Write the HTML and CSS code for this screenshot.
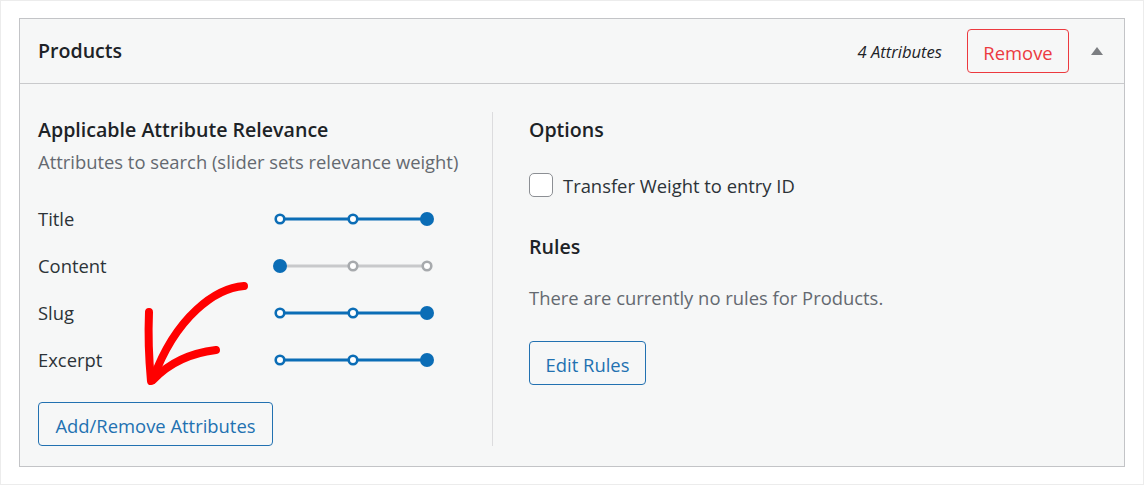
FILE: index.html
```html
<!DOCTYPE html>
<html lang="en">
<head>
<meta charset="utf-8">
<title>Products</title>
<link rel="stylesheet" href="styles.css">
</head>
<body>
<div class="frame">
  <section class="panel">
    <header class="panel-head">
      <h2 class="panel-title">Products</h2>
      <span class="attr-count">4 Attributes</span>
      <button class="btn btn-remove" type="button">Remove</button>
      <span class="toggle" aria-hidden="true"></span>
    </header>
    <div class="panel-body">
      <div class="col col-left">
        <h3 class="col-title">Applicable Attribute Relevance</h3>
        <p class="muted sub">Attributes to search (slider sets relevance weight)</p>
        <ul class="attr-list">
          <li class="attr-row">
            <span class="attr-name">Title</span>
            <svg class="slider" viewBox="0 0 162 16" width="162" height="16">
              <line class="track on" x1="8" y1="8" x2="155" y2="8"/>
              <circle class="dot on" cx="8" cy="8" r="4.3"/>
              <circle class="dot on" cx="81" cy="8" r="4.3"/>
              <circle class="knob" cx="155" cy="8" r="7"/>
            </svg>
          </li>
          <li class="attr-row">
            <span class="attr-name">Content</span>
            <svg class="slider" viewBox="0 0 162 16" width="162" height="16">
              <line class="track off" x1="8" y1="8" x2="155" y2="8"/>
              <circle class="dot off" cx="81" cy="8" r="4.3"/>
              <circle class="dot off" cx="155" cy="8" r="4.3"/>
              <circle class="knob" cx="8" cy="8" r="7"/>
            </svg>
          </li>
          <li class="attr-row">
            <span class="attr-name">Slug</span>
            <svg class="slider" viewBox="0 0 162 16" width="162" height="16">
              <line class="track on" x1="8" y1="8" x2="155" y2="8"/>
              <circle class="dot on" cx="8" cy="8" r="4.3"/>
              <circle class="dot on" cx="81" cy="8" r="4.3"/>
              <circle class="knob" cx="155" cy="8" r="7"/>
            </svg>
          </li>
          <li class="attr-row">
            <span class="attr-name">Excerpt</span>
            <svg class="slider" viewBox="0 0 162 16" width="162" height="16">
              <line class="track on" x1="8" y1="8" x2="155" y2="8"/>
              <circle class="dot on" cx="8" cy="8" r="4.3"/>
              <circle class="dot on" cx="81" cy="8" r="4.3"/>
              <circle class="knob" cx="155" cy="8" r="7"/>
            </svg>
          </li>
        </ul>
        <button class="btn btn-blue btn-attrs" type="button">Add/Remove Attributes</button>
      </div>
      <div class="divider"></div>
      <div class="col col-right">
        <h3 class="col-title">Options</h3>
        <label class="check-row">
          <span class="checkbox"></span>
          <span>Transfer Weight to entry ID</span>
        </label>
        <h3 class="col-title rules-title">Rules</h3>
        <p class="muted rules-text">There are currently no rules for Products.</p>
        <button class="btn btn-blue btn-rules" type="button">Edit Rules</button>
      </div>
    </div>
  </section>
  <svg class="scribble" viewBox="0 0 140 120" width="140" height="120" aria-hidden="true">
    <path d="M113 12 C 85 14, 45 42, 22 105"/>
    <path d="M18 38 C 17 62, 18 86, 20 107"/>
    <path d="M85 76 C 60 79, 38 89, 22 106"/>
  </svg>
</div>
</body>
</html>
```
FILE: styles.css
```css
* { box-sizing: border-box; }

html, body {
  margin: 0;
  padding: 0;
  background: #fff;
}

body {
  font-family: "Open Sans", "Noto Sans", "Liberation Sans", sans-serif;
  color: #2c3338;
  font-size: 18.4px;
}

.frame {
  position: relative;
  width: 1144px;
  height: 485px;
  padding: 17px 18px 0 18px;
  border: 1px solid #ececec;
}

.panel {
  width: 1106px;
  height: 449px;
  border: 1px solid #c3c4c7;
  background: #f6f7f7;
  display: flex;
  flex-direction: column;
}

.panel-head {
  height: 65px;
  flex: none;
  border-bottom: 1px solid #c9cacc;
  display: flex;
  align-items: center;
  padding: 0 21px 0 18px;
}

.panel-title {
  margin: 0;
  font-size: 19.6px;
  font-weight: 600;
  color: #1d2327;
  flex: 1;
  line-height: 24px;
}

.attr-count {
  font-style: italic;
  font-size: 16.6px;
  color: #1d2327;
  margin-right: 25px;
}

.btn {
  font-family: inherit;
  font-size: 18.4px;
  height: 44px;
  border-radius: 4px;
  background: transparent;
  cursor: pointer;
  padding: 0;
  line-height: 46px;
  text-align: center;
  overflow: hidden;
}

.btn-remove {
  width: 102px;
  border: 1px solid #ec3a3f;
  color: #ec3a3f;
  margin-top: -1px;
}

.toggle {
  width: 0;
  height: 0;
  margin-left: 22px;
  border-left: 6px solid transparent;
  border-right: 6px solid transparent;
  border-bottom: 8px solid #7c7e82;
}

.panel-body {
  flex: 1;
  display: grid;
  grid-template-columns: 454px 1px 1fr;
  padding: 28px 0 20px 18px;
}

.divider {
  background: #dcdcde;
}

.col-left { padding-top: 6px; }
.col-right { padding: 6px 0 0 36px; }

.col-title {
  margin: 0;
  font-size: 19.6px;
  font-weight: 600;
  line-height: 24px;
  color: #1d2327;
}

.muted {
  color: #646970;
  margin: 0;
  line-height: 24px;
}

.sub {
  margin-top: 8px;
}

.attr-list {
  list-style: none;
  margin: 21px 0 0 0;
  padding: 0;
}

.attr-row {
  height: 47px;
  display: flex;
  align-items: center;
}

.attr-name {
  width: 234px;
  color: #2c3338;
}

.slider { display: block; }

.track { stroke-width: 3; }
.track.on { stroke: #0b6db6; }
.track.off { stroke: #c8c9cb; }

.dot { fill: #fff; stroke-width: 2.6; }
.dot.on { stroke: #0b6db6; }
.dot.off { stroke: #a7aaad; }

.knob { fill: #0b6db6; }

.btn-blue {
  border: 1px solid #2271b1;
  color: #2271b1;
}

.btn-attrs {
  margin-top: 19px;
  width: 235px;
}

.check-row {
  display: flex;
  align-items: center;
  margin-top: 31px;
  height: 24px;
  color: #2c3338;
}

.checkbox {
  width: 24px;
  height: 24px;
  border: 1px solid #8c8f94;
  border-radius: 5px;
  background: #fff;
  margin-right: 10px;
}

.rules-title { margin-top: 38px; }

.rules-text { margin-top: 27px; }

.btn-rules {
  margin-top: 31px;
  width: 117px;
}

.scribble {
  position: absolute;
  left: 130px;
  top: 273px;
  fill: none;
  stroke: #ff0000;
  stroke-width: 8;
  stroke-linecap: round;
  stroke-linejoin: round;
}
```
